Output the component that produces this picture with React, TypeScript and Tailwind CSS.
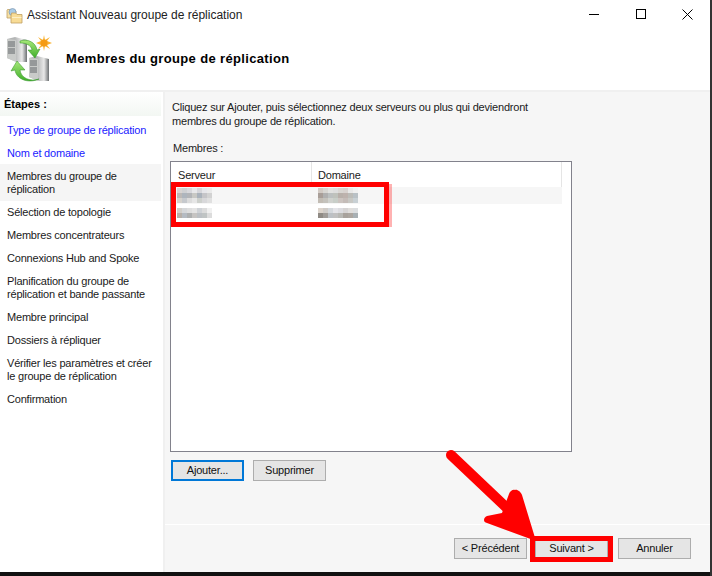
import React from "react";

const font = { fontFamily: "Liberation Sans" };

function Blur({ colors }: { colors: string[][] }) {
  return (
    <div className="flex flex-col">
      {colors.map((r, i) => (
        <div key={i} className="flex">
          {r.map((c, j) => (
            <div key={j} className="w-[5px] h-[5px]" style={{ background: c }} />
          ))}
        </div>
      ))}
    </div>
  );
}

const s1 = [
  ["#d9d4d2", "#cfd0d2", "#d8d8dc", "#e8e8ea", "#d6d6da", "#e6e6ea", "#eaeaea"],
  ["#bdb9b6", "#aeb5bd", "#b3b5b8", "#c8c8c4", "#aab2bb", "#c5c5c8", "#d2d2d2"],
  ["#d6d2cc", "#c6c9cd", "#dcdcdc", "#e6e6e6", "#cdd0cc", "#d8d8da", "#e0e0e0"],
];
const s2 = [
  ["#d2cec8", "#d6d8da", "#dedede", "#e4e4e4", "#cfd2d6", "#dcdcdc", "#f0f0f0"],
  ["#b8b0a8", "#b5bbc2", "#aeb0b0", "#c6c4c2", "#bcc0c4", "#c0c4c4", "#dcdcdc"],
];
const d1 = [
  ["#d2cac4", "#d8d6d2", "#e2e2e0", "#dedede", "#d9d6d2", "#d8d2cf", "#e8e8e8", "#f0f0f0"],
  ["#a89e98", "#b0b0b0", "#bcc0c0", "#bfc2bc", "#b8b0aa", "#bdb2ad", "#bcbcb8", "#b9c1c6"],
  ["#c2bcb4", "#c4c2bc", "#d0d2ce", "#c8cec8", "#ccc4c0", "#c4bcb8", "#c8c8c4", "#c8d0d4"],
];
const d2 = [
  ["#dcd4cc", "#d0ccc8", "#d4d8dc", "#e4e4e8", "#dcdce0", "#d6d4d4", "#e0dedc", "#dcdee0"],
  ["#8f8a84", "#a09c98", "#bcc0c4", "#c0c0c0", "#b8b8b4", "#a8a29c", "#aca6a0", "#a8b0b4"],
];

function Btn({ children, cls = "" }: { children: React.ReactNode; cls?: string }) {
  return (
    <div className={`h-[21px] w-[73px] flex items-center justify-center bg-[#e5e5e5] border border-[#adadad] text-[11px] tracking-[-0.2px] text-[#111] ${cls}`}>
      {children}
    </div>
  );
}

const Step = ({ children, link, active }: { children: React.ReactNode; link?: boolean; active?: boolean }) => (
  <div className={`pl-[7px] py-[5px] leading-[13px] text-[11px] tracking-[-0.2px] w-[161px] whitespace-nowrap ${link ? "text-[#1a1aff]" : "text-[#1a1a1a]"} ${active ? "bg-[#f5f5f5]" : ""}`}>
    {children}
  </div>
);

function Server({ x, y }: { x: number; y: number }) {
  return (
    <g transform={`translate(${x} ${y})`}>
      <path d="M0 2 L8 0 L20 3 L20 25 L10 25 L0 21 Z" fill="url(#srvSide)" />
      <path d="M0 2 L9 3 L9 25 L0 21 Z" fill="#c9cbc9" />
      <path d="M1 5h7M1 7h7M1 9h7M1 12h7M1 14h7M1 16h7" stroke="#62676a" strokeWidth="1" />
    </g>
  );
}

export default function App() {
  return (
    <div className="relative w-[712px] h-[576px] bg-white overflow-hidden" style={font}>
      <div className="w-[710px] h-[572px] bg-white flex flex-col">
        {/* title bar */}
        <div className="h-[30px] shrink-0 flex items-center pl-[6px]">
          <svg width="17" height="17" viewBox="0 0 17 17">
            <path d="M1 3 L1 11 L10 11 L10 4 L5.5 4 L4.5 2.5 L1.5 2.5 Z" fill="#f6e0a4" stroke="#bf9f62" strokeWidth="0.8" />
            <circle cx="6.5" cy="5" r="3.5" fill="#a9cbe6" stroke="#7b96b0" strokeWidth="0.7" />
            <path d="M5 9 L5 16 L16 16 L16 7.5 L11 7.5 L9.5 6 L5.5 6 Z" fill="#f8dc96" stroke="#bf9f62" strokeWidth="0.8" />
            <path d="M6 10.5 H15.5" stroke="#fdf0c8" strokeWidth="1" />
          </svg>
          <span className="ml-[4px] text-[12px] text-[#222]">Assistant Nouveau groupe de réplication</span>
          <div className="ml-auto flex items-center pb-[2px]">
            <div className="w-[46px] flex justify-center relative left-[-1px]"><div className="w-[10px] h-px bg-black" /></div>
            <div className="w-[46px] flex justify-center"><div className="w-[10px] h-[10px] border border-black" /></div>
            <div className="w-[46px] flex justify-center">
              <svg width="11" height="11" viewBox="0 0 11 11"><path d="M0.5 0.5 L10.5 10.5 M10.5 0.5 L0.5 10.5" stroke="#000" strokeWidth="1" /></svg>
            </div>
          </div>
        </div>
        {/* header */}
        <div className="h-[62px] shrink-0 flex items-center pl-[6px] border-b-2 border-[#f0f0f0]">
          <svg width="46" height="50" viewBox="0 0 46 50">
            <defs>
              <linearGradient id="srvSide" x1="0" y1="0" x2="1" y2="0">
                <stop offset="0.4" stopColor="#b4b6b6" />
                <stop offset="0.75" stopColor="#e8e8e8" />
                <stop offset="1" stopColor="#6c7072" />
              </linearGradient>
              <linearGradient id="arr" x1="0" y1="0" x2="0" y2="1">
                <stop offset="0" stopColor="#a8e87a" />
                <stop offset="1" stopColor="#3fae2a" />
              </linearGradient>
            </defs>
            <Server x={1} y={2} />
            <Server x={23} y={21} />
            <path d="M14 6 C22 3 30 8 31 15 L34 14 L29 23 L22 15 L26 15 C25 10 20 8 14 8 Z" fill="url(#arr)" stroke="#2f8f25" strokeWidth="0.5" />
            <path d="M33 44 C24 47 15 43 14 35 L19 35 L11 26 L5 36 L9 35 C10 44 22 49 33 44 Z" fill="url(#arr)" stroke="#2f8f25" strokeWidth="0.5" />
            <path d="M38 0 L39 5 L44 2 L41 6 L46 8 L41 10 L44 14 L39 11 L38 16 L37 11 L32 14 L35 10 L30 8 L35 6 L32 2 L37 5 Z" fill="#f9b233" />
            <circle cx="38" cy="8" r="3.5" fill="#f59a12" />
          </svg>
          <span className="ml-[14px] text-[13px] font-bold text-black tracking-[0.35px] relative top-[-1px]">
            Membres du groupe de réplication
          </span>
        </div>
        {/* body */}
        <div className="flex-1 flex min-h-0">
          <div className="w-[161px] shrink-0 mr-[2px]">
            <div className="h-[26px]">
              <div className="h-[24px] pl-[4px] pt-[4px] text-[11px] font-bold text-black leading-[16px] bg-gradient-to-b from-white to-[#f3f7f3]">Étapes :</div>
            </div>
            <div className="pt-[1px]">
              <Step link>Type de groupe de réplication</Step>
              <Step link>Nom et domaine</Step>
              <div className="mt-[-1px] pt-px bg-[#f5f5f5]"><Step active>Membres du groupe de<br />réplication</Step></div>
              <Step>Sélection de topologie</Step>
              <Step>Membres concentrateurs</Step>
              <Step>Connexions Hub and Spoke</Step>
              <Step>Planification du groupe de<br />réplication et bande passante</Step>
              <Step>Membre principal</Step>
              <Step>Dossiers à répliquer</Step>
              <Step>Vérifier les paramètres et créer<br />le groupe de réplication</Step>
              <Step>Confirmation</Step>
            </div>
          </div>
          <div className="flex-1 bg-[#f6f6f6] border-l-2 border-[#f0f0f0] flex flex-col min-w-0">
            <div className="flex-1 pl-[5px] pt-[8px] border-b border-white">
              <p className="pl-[2px] text-[11px] tracking-[-0.2px] leading-[14px] text-[#1a1a1a] whitespace-nowrap">
                Cliquez sur Ajouter, puis sélectionnez deux serveurs ou plus qui deviendront<br />membres du groupe de réplication.
              </p>
              <p className="pl-[3px] mt-[14px] text-[11px] tracking-[-0.2px] leading-[13px] text-[#1a1a1a]">Membres :</p>
              <div className="mt-[6px] w-[402px] h-[291px] bg-white border border-[#82828c]">
                <div className="h-[25px] flex text-[11px] tracking-[-0.2px] text-[#1a1a1a] items-center">
                  <div className="w-[141px] h-full pl-[7px] pt-[1px] flex items-center border-r border-[#e5e5e5]">Serveur</div>
                  <div className="w-[250px] h-full pl-[6px] pt-[1px] flex items-center border-r border-[#e5e5e5]">Domaine</div>
                </div>
                <div className="w-[391px] h-[17px] bg-[#f6f6f6] flex items-center pl-[6px]">
                  <div className="w-[141px]"><Blur colors={s1} /></div>
                  <Blur colors={d1} />
                </div>
                <div className="w-[391px] h-[17px] flex items-center pl-[6px]">
                  <div className="w-[141px]"><Blur colors={s2} /></div>
                  <Blur colors={d2} />
                </div>
              </div>
              <div className="mt-[8px] ml-[1px] flex gap-[9px]">
                <Btn cls="!border-2 !border-[#0078d7]">Ajouter...</Btn>
                <Btn>Supprimer</Btn>
              </div>
            </div>
            <div className="h-[47px] shrink-0 flex justify-end items-center gap-[9px] pr-[19px] pb-[1px]">
              <Btn>&lt; Précédent</Btn>
              <div className="relative left-[-1px]"><Btn>Suivant &gt;</Btn></div>
              <Btn>Annuler</Btn>
            </div>
          </div>
        </div>
      </div>
      {/* screen edges */}
      <div className="absolute left-0 top-[572px] w-full h-[4px] bg-[#111]" />
      <div className="absolute left-[710px] top-0 w-[2px] h-full bg-[#333]" />
      {/* annotations */}
      <div className="absolute left-[388px] top-[184px] w-[4px] h-[43px] bg-[#ff0000]/30" />
      <div className="absolute left-[171px] top-[182px] w-[218px] h-[45px] border-[5px] border-[#ff0000]" />
      <div className="absolute left-[530px] top-[536px] w-[83px] h-[26px] border-[5px] border-[#ff0000]" />
      <svg className="absolute left-[440px] top-[445px]" width="110" height="100" viewBox="0 0 110 100">
        <path d="M11 10 L70 66" stroke="#ff0000" strokeWidth="10" strokeLinecap="round" />
        <path d="M75 45 C73 44 70 46 69 49 L62 68 L47 71 C43 73 43 77 47 78 L96 96 L82 50 C81 47 77 44 75 45 Z" fill="#ff0000" />
      </svg>
    </div>
  );
}
